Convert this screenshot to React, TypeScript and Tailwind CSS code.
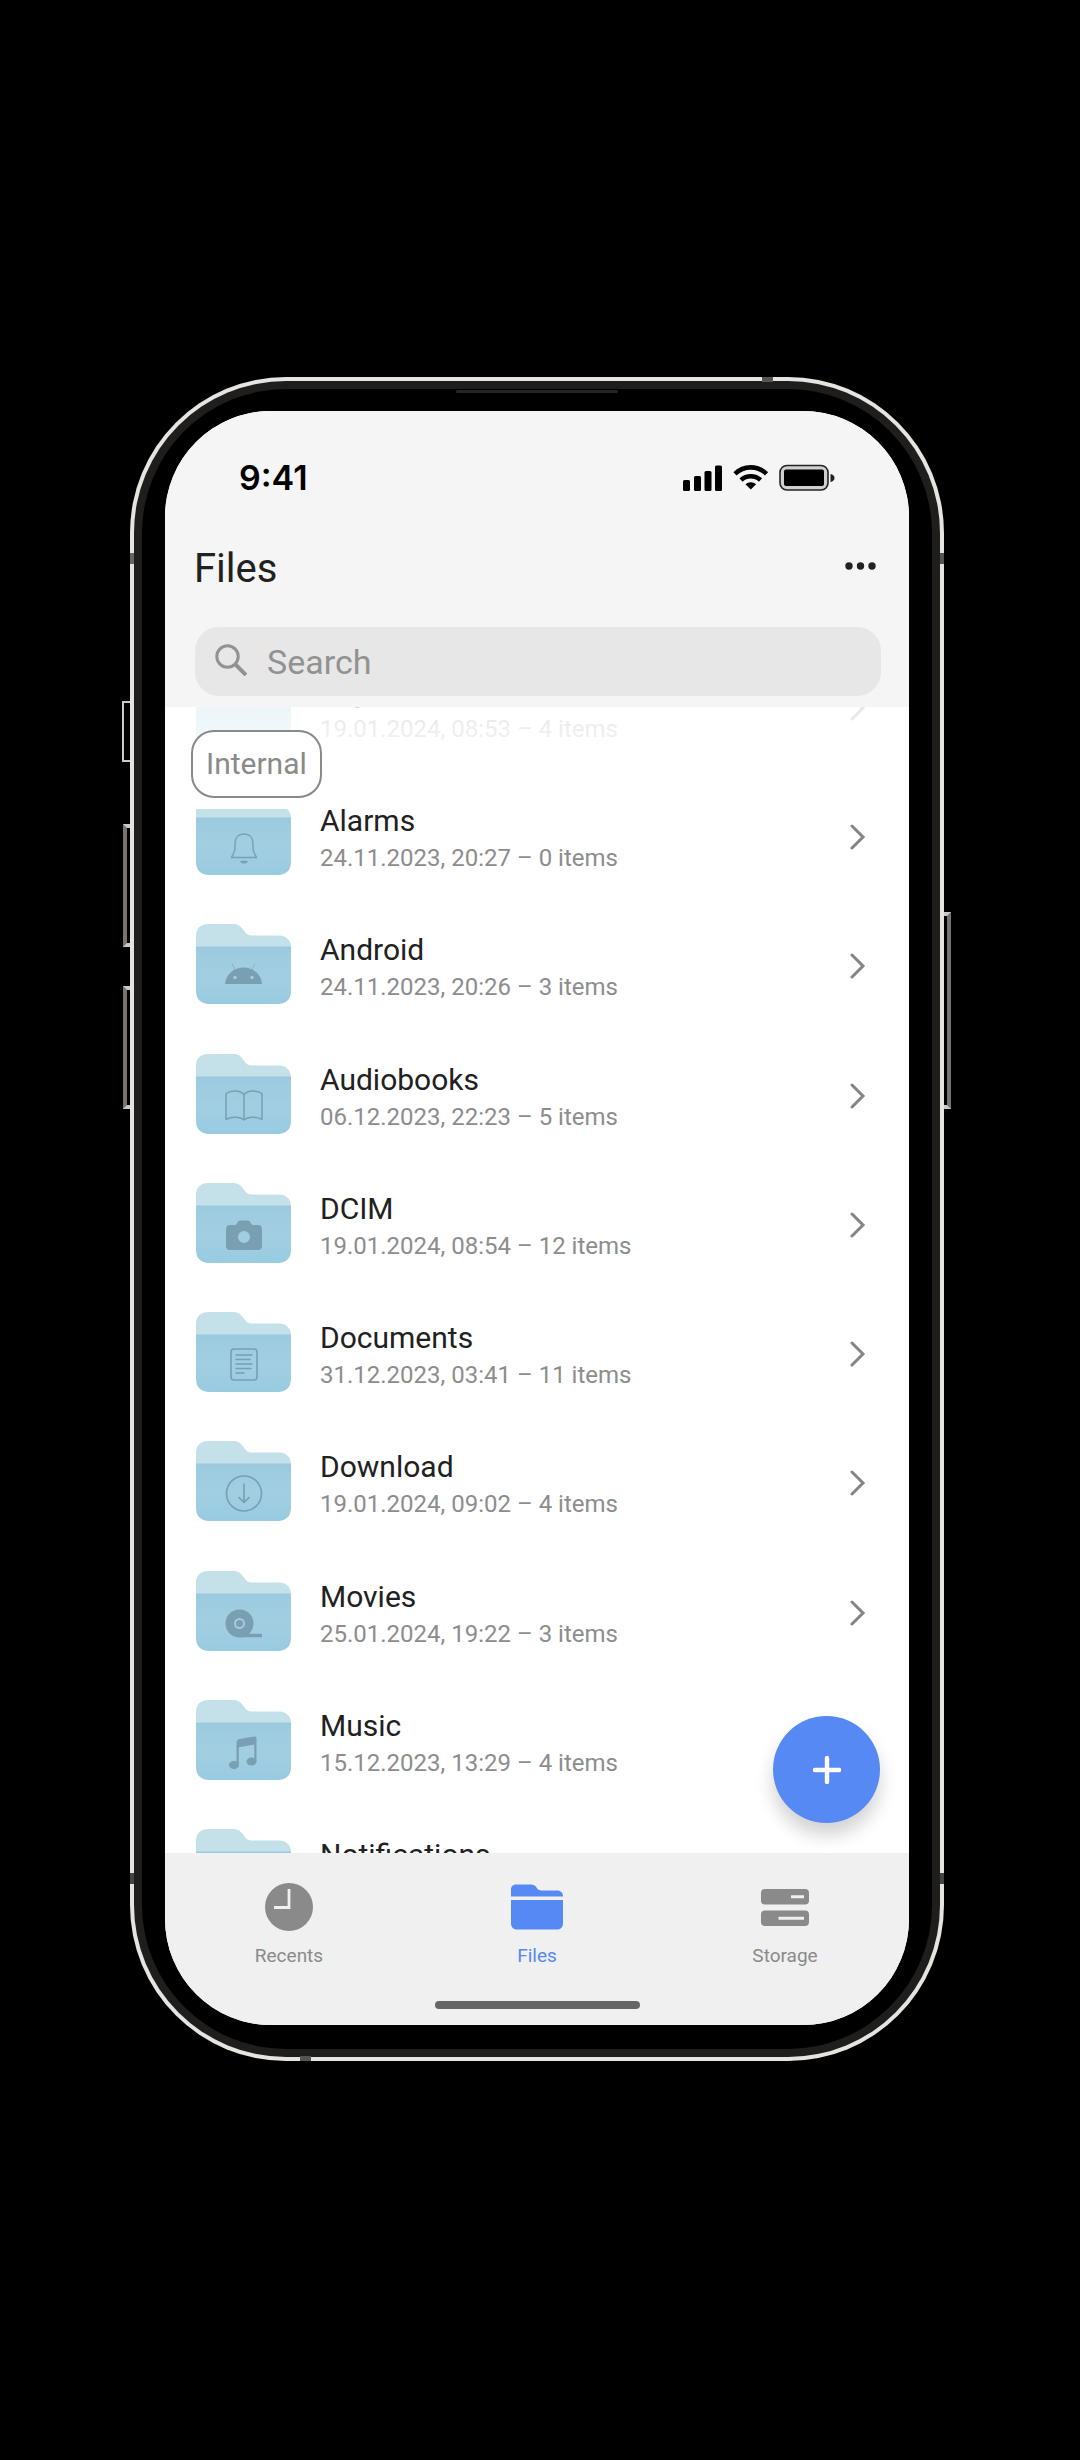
import React from "react";

const INK = "#789fb2";

type IconName =
  | "bell"
  | "android"
  | "book"
  | "camera"
  | "document"
  | "download"
  | "movie"
  | "music"
  | "none";

function Emblem({ name }: { name: IconName }) {
  switch (name) {
    case "bell":
      return (
        <g fill="none" stroke={INK} strokeWidth="1.4" strokeLinejoin="round" strokeLinecap="round">
          <path d="M35.5 62.500h25c-1.500-3.500-3.500-5-3.500-9.500v-5c0-5.500-3.500-9-9-9s-9 3.500-9 9v5c0 4.500-2 6-3.500 9.500z" />
          <path d="M45 66.500c1.500 1.800 4.500 1.800 6 0z" fill={INK} />
        </g>
      );
    case "android":
      return (
        <g>
          <path d="M29 60C30 50 38 43.500 47.500 43.500S65 50 66 60z" fill={INK} />
          <path d="M36 39.500l3.500 7M59 39.500l-3.500 7" stroke={INK} strokeWidth="1" fill="none" opacity="0.6" />
          <circle cx="39" cy="53.500" r="1.700" fill="#a3cee0" />
          <circle cx="56" cy="53.500" r="1.700" fill="#a3cee0" />
        </g>
      );
    case "book":
      return (
        <g fill="none" stroke={INK} strokeWidth="1.500" strokeLinejoin="round">
          <path d="M48 40.500c-4-4.500-13-4.500-18-1v26c5-3 14-3 18 .500 4-3.500 13-3.500 18-.500v-26c-5-3.500-14-3.500-18 1z" />
          <path d="M48 40.500V66" />
        </g>
      );
    case "camera":
      return (
        <path
          fill={INK}
          fillRule="evenodd"
          d="M34 42h4.500c1.500 0 2-1 2.800-2.300.9-1.500 1.700-2.200 3.700-2.200h6c2 0 2.800.7 3.700 2.200.8 1.300 1.300 2.300 2.800 2.300H62c2.500 0 4 1.500 4 4v17c0 2.500-1.500 4-4 4H34c-2.500 0-4-1.500-4-4V46c0-2.500 1.500-4 4-4zM48 48a6 6 0 1 0 0 12 6 6 0 0 0 0-12z"
        />
      );
    case "document":
      return (
        <g fill="none" stroke={INK} strokeWidth="1.600" strokeLinecap="round">
          <rect x="35" y="37" width="26" height="31" rx="3" />
          <path d="M40 43h16M40 47.500h14M40 52h16M40 56.500h15M40 61h8" />
        </g>
      );
    case "download":
      return (
        <g fill="none" stroke={INK} strokeWidth="1.600" strokeLinecap="round" strokeLinejoin="round">
          <circle cx="48" cy="52.500" r="17.500" />
          <path d="M48 43v18M43 56.500l5 5 5-5" />
        </g>
      );
    case "movie":
      return (
        <g>
          <circle cx="43.500" cy="52.500" r="14" fill={INK} />
          <circle cx="43.500" cy="52.500" r="4.500" fill="none" stroke="#a3cee0" strokeWidth="2" />
          <path d="M43.500 64.500H66" stroke={INK} strokeWidth="3.500" />
        </g>
      );
    case "music":
      return (
        <g fill={INK}>
          <path d="M40.500 42.500c0-2 1-3 3-3.500l14.500-2.500c1.500-.3 2.500.3 2.500 2V61h-2.200V44.500l-15.500 2.800V64h-2.300z" />
          <ellipse cx="38" cy="65" rx="5" ry="4" />
          <ellipse cx="55.500" cy="61.500" rx="5" ry="4" />
        </g>
      );
    default:
      return null;
  }
}

function Folder({ icon }: { icon: IconName }) {
  return (
    <svg viewBox="0 0 95 80" className="h-20 w-[95px] shrink-0" aria-hidden="true">
      <defs>
        <linearGradient id="folder-front" x1="0" y1="0" x2="0" y2="1">
          <stop offset="0" stopColor="#9bcadf" />
          <stop offset="0.5" stopColor="#a3cee1" />
          <stop offset="1" stopColor="#98cbe1" />
        </linearGradient>
      </defs>
      <path
        fill="#c4e1ea"
        d="M0 30V12C0 4 5 0 12 0h25c5 0 7.500 2 10.500 6l1.500 2c2 2.500 3.500 3.500 7 3.500h27C90 11.500 95 16 95 23v7z"
      />
      <path fill="url(#folder-front)" d="M0 22.500h95V67c0 8-5 13-13 13H13C5 80 0 75 0 67z" />
      <Emblem name={icon} />
    </svg>
  );
}

const folders: { name: string; info: string; icon: IconName; open: boolean }[] = [
  { name: "Key", info: "19.01.2024, 08:53 – 4 items", icon: "none", open: true },
  { name: "Alarms", info: "24.11.2023, 20:27 – 0 items", icon: "bell", open: true },
  { name: "Android", info: "24.11.2023, 20:26 – 3 items", icon: "android", open: true },
  { name: "Audiobooks", info: "06.12.2023, 22:23 – 5 items", icon: "book", open: true },
  { name: "DCIM", info: "19.01.2024, 08:54 – 12 items", icon: "camera", open: true },
  { name: "Documents", info: "31.12.2023, 03:41 – 11 items", icon: "document", open: true },
  { name: "Download", info: "19.01.2024, 09:02 – 4 items", icon: "download", open: true },
  { name: "Movies", info: "25.01.2024, 19:22 – 3 items", icon: "movie", open: true },
  { name: "Music", info: "15.12.2023, 13:29 – 4 items", icon: "music", open: false },
  { name: "Notifications", info: "24.11.2023, 20:26 – 0 items", icon: "none", open: true },
];

function FolderRow({ name, info, icon, open }: (typeof folders)[number]) {
  return (
    <li className="grid">
      <button type="button" className="flex items-center gap-[29px] pr-[43px] pl-[31px] text-left">
        <Folder icon={icon} />
        <span className="flex-1 pt-[10px]">
          <span className="block text-[30px] leading-9 text-[#212121]">{name}</span>
          <span className="block text-[24px] leading-[38px] text-[#8d8d8d]">{info}</span>
        </span>
        {open && (
          <svg viewBox="0 0 16 26" className="mt-1 h-[26px] w-4" aria-hidden="true">
            <path d="M2 2l11 11L2 24" fill="none" stroke="#858585" strokeWidth="3" strokeLinecap="round" />
          </svg>
        )}
      </button>
    </li>
  );
}

function StatusBar() {
  return (
    <div className="flex h-[134px] items-center justify-between px-[74px]">
      <span className="font-[Inter,sans-serif] text-[34px] leading-10 font-semibold text-black">9:41</span>
      <svg viewBox="0 0 152 28" className="h-7 w-[152px]" aria-hidden="true">
        <rect x="0" y="16" width="7" height="11" rx="1.500" />
        <rect x="11" y="12" width="7" height="15" rx="1.500" />
        <rect x="21.500" y="7" width="7" height="20" rx="1.500" />
        <rect x="32" y="1.500" width="7" height="25.500" rx="1.500" />
        <g fill="none" stroke="#000" strokeWidth="4.600">
          <path d="M52 9.800a22.500 22.500 0 0 1 31.500 0" />
          <path d="M58 16a14.500 14.500 0 0 1 19.500 0" />
        </g>
        <path d="M67.800 25.500l-5.300-5.200a7.800 7.800 0 0 1 10.600 0z" />
        <rect x="97" y="1.500" width="48" height="24.500" rx="7" fill="#d0d0d0" stroke="#222" strokeWidth="1.600" />
        <rect x="101" y="5.500" width="40" height="16.500" rx="2" />
        <path d="M147.500 10c2.500.5 4 2 4 4s-1.500 3.500-4 4z" fill="#222" />
      </svg>
    </div>
  );
}

function Tab({ label, active, children }: { label: string; active?: boolean; children: React.ReactNode }) {
  return (
    <button
      type="button"
      aria-current={active ? "page" : undefined}
      className={
        "flex flex-1 flex-col items-center gap-3 " + (active ? "text-[#5689f3]" : "text-[#8a8a8a]")
      }
    >
      {children}
      <span className="text-[19px] leading-6">{label}</span>
    </button>
  );
}

export default function App() {
  return (
    <div className="h-screen min-h-[1400px] bg-black pt-[377px] pr-[136px] pb-[399px] pl-[130px] font-[Roboto,sans-serif]">
      <div className="relative h-full">
        <i className="absolute top-[324px] -left-2 h-[61px] w-2 border-2 border-r-0 border-[#c9c9c9]" />
        <i className="absolute top-[447px] -left-[7px] h-[123px] w-[7px] border-y-4 border-l-4 border-x-[#77736e] border-y-[#c9c9c9]" />
        <i className="absolute top-[609px] -left-[7px] h-[123px] w-[7px] border-y-4 border-l-4 border-x-[#77736e] border-y-[#c9c9c9]" />
        <i className="absolute top-[535px] -right-[7px] h-[197px] w-[7px] border-y-4 border-r-4 border-x-[#77736e] border-y-[#c9c9c9]" />

        <div className="h-full rounded-[156px] bg-[#e6e4e1] p-1">
          <div className="h-full rounded-[152px] bg-[#1f1e1d] p-2">
            <div className="h-full rounded-[144px] bg-black px-[23px] pt-[22px] pb-6">
              <main className="relative flex h-full flex-col overflow-hidden rounded-[106px] bg-white">
                <header className="bg-[#f5f5f5] pb-[11px]">
                  <StatusBar />
                  <div className="flex h-[82px] items-start justify-between pr-8 pl-[29px]">
                    <h1 className="pt-px text-[40px] leading-[46px] text-[#212121]">Files</h1>
                    <button type="button" aria-label="More options" className="pt-4">
                      <svg viewBox="0 0 34 10" className="h-[10px] w-[34px]" fill="#222" aria-hidden="true">
                        <circle cx="6" cy="5" r="3.700" />
                        <circle cx="17.500" cy="5" r="3.700" />
                        <circle cx="29" cy="5" r="3.700" />
                      </svg>
                    </button>
                  </div>
                  <label className="mr-7 ml-[30px] flex h-[69px] items-center gap-5 rounded-[24px] bg-[#e7e7e7] px-5">
                    <svg viewBox="0 0 32 32" className="-mt-1 h-8 w-8 shrink-0" fill="none" stroke="#929292" aria-hidden="true">
                      <circle cx="12.500" cy="12.500" r="10.700" strokeWidth="3" />
                      <path d="M20.500 20.500L31 31" strokeWidth="4" />
                    </svg>
                    <input
                      type="text"
                      aria-label="Search"
                      placeholder="Search"
                      className="min-w-0 flex-1 bg-transparent text-[34px] leading-[42px] text-[#212121] outline-none placeholder:text-[#929292]"
                    />
                  </label>
                </header>

                <section className="relative min-h-0 flex-1 overflow-hidden bg-white" aria-label="Internal storage">
                  <ul className="-mt-[66px] grid h-[1293px] auto-rows-fr">
                    {folders.map((f) => (
                      <FolderRow key={f.name} {...f} />
                    ))}
                  </ul>
                  <div className="absolute inset-x-0 top-0 flex h-[102px] items-start bg-linear-to-b from-white/80 to-white to-90% pt-[23px] pl-[26px]">
                    <button
                      type="button"
                      className="h-[68px] rounded-[23px] border-2 border-[#8a8a8a] bg-white px-[13px] pb-[2px] text-[30px] text-[#8a8a8a]"
                    >
                      Internal
                    </button>
                  </div>
                  <button
                    type="button"
                    aria-label="Add"
                    className="absolute right-[29px] bottom-[30px] grid size-[107px] place-items-center rounded-full bg-[#5689f3] shadow-[0_12px_18px_rgba(0,0,0,0.18)]"
                  >
                    <svg viewBox="0 0 28 28" className="size-7" aria-hidden="true">
                      <path d="M14 2v24M2 14h24" stroke="#fff" strokeWidth="4.400" strokeLinecap="round" />
                    </svg>
                  </button>
                </section>

                <nav className="flex flex-col items-center bg-[#f0f0f0] pt-[29px] pb-4">
                  <div className="flex w-full">
                    <Tab label="Recents">
                      <svg viewBox="0 0 50 50" className="size-[50px]" aria-hidden="true">
                        <circle cx="25" cy="25" r="24" fill="currentColor" />
                        <path d="M25 7v18.500H10" fill="none" stroke="#f0f0f0" strokeWidth="2.800" />
                      </svg>
                    </Tab>
                    <Tab label="Files" active>
                      <svg viewBox="0 0 52 50" className="h-[50px] w-[52px]" fill="currentColor" aria-hidden="true">
                        <path d="M0 14.500V8c0-4 2-5.500 5.500-5.500H20c2.500 0 4 .8 5.500 3s2.500 3 5 3H46c4 0 6 2.500 6 6z" />
                        <path d="M0 18h52v23c0 4-2 6.500-6 6.500H6c-4 0-6-2.500-6-6.500z" />
                      </svg>
                    </Tab>
                    <Tab label="Storage">
                      <svg viewBox="0 0 50 50" className="size-[50px]" aria-hidden="true">
                        <rect x="1" y="7" width="48" height="15.500" rx="4" fill="currentColor" />
                        <rect x="1" y="28.500" width="48" height="15.500" rx="4" fill="currentColor" />
                        <path d="M31 14.800h13M18.500 36.200H44" stroke="#f0f0f0" strokeWidth="3" />
                      </svg>
                    </Tab>
                  </div>
                  <div className="mt-[33px] h-2 w-[205px] rounded-full bg-[#666]" />
                </nav>
              </main>
            </div>
          </div>
        </div>

        <i className="absolute top-[13px] left-1/2 h-[3px] w-[162px] -translate-x-1/2 rounded-full bg-[#252525]" />
        <i className="absolute top-0 right-[171px] h-[5px] w-[11px] bg-[#555]" />
        <i className="absolute bottom-0 left-[170px] h-[5px] w-[11px] bg-[#555]" />
        <i className="absolute top-[176px] left-0 h-[11px] w-1 bg-[#666]" />
        <i className="absolute top-[176px] right-0 h-[11px] w-1 bg-[#555]" />
        <i className="absolute bottom-[177px] left-0 h-[11px] w-1 bg-[#444]" />
        <i className="absolute right-0 bottom-[177px] h-[11px] w-1 bg-[#444]" />
      </div>
    </div>
  );
}
